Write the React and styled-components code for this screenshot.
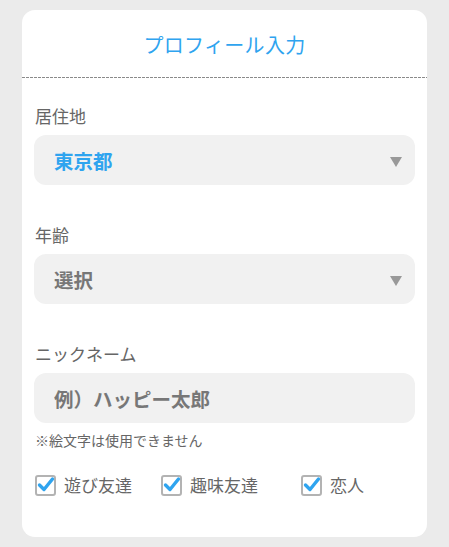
import React, { useState } from "react";
import styled, { createGlobalStyle } from "styled-components";

const GlobalStyle = createGlobalStyle`
  html, body {
    margin: 0;
    padding: 0;
    background: #ebebeb;
  }
  body {
    font-family: "Noto Sans CJK JP", "Noto Sans", sans-serif;
  }
`;

const BLUE = "#2fa4ef";

function Check({ checked }) {
  return (
    <STBox>
      {checked && (
        <svg width="22" height="22" viewBox="0 0 22 22">
          <path
            d="M4.5 11 L9 15.5 L17.5 5"
            fill="none"
            stroke={BLUE}
            strokeWidth="3.4"
            strokeLinecap="round"
            strokeLinejoin="round"
          />
        </svg>
      )}
    </STBox>
  );
}

function App() {
  const [purposes, setPurposes] = useState({
    play: true,
    hobby: true,
    love: true,
  });

  const toggle = (key) => {
    setPurposes({ ...purposes, [key]: !purposes[key] });
  };

  return (
    <STWrapper>
      <GlobalStyle />
      <STCard>
        <STHeader>
          <STTitle>プロフィール入力</STTitle>
        </STHeader>
        <STDivider />
        <STBody>
          <STField>
            <STLabel>居住地</STLabel>
            <STSelect $active>
              <span>東京都</span>
              <STArrow />
            </STSelect>
          </STField>
          <STField>
            <STLabel>年齢</STLabel>
            <STSelect>
              <span>選択</span>
              <STArrow />
            </STSelect>
          </STField>
          <STField>
            <STLabel>ニックネーム</STLabel>
            <STInput placeholder="例）ハッピー太郎" />
            <STNote>※絵文字は使用できません</STNote>
          </STField>
          <STChecks>
            <STCheckItem onClick={() => toggle("play")}>
              <Check checked={purposes.play} />
              遊び友達
            </STCheckItem>
            <STCheckItem onClick={() => toggle("hobby")}>
              <Check checked={purposes.hobby} />
              趣味友達
            </STCheckItem>
            <STCheckItem onClick={() => toggle("love")}>
              <Check checked={purposes.love} />
              恋人
            </STCheckItem>
          </STChecks>
        </STBody>
      </STCard>
    </STWrapper>
  );
}

export default App;

const STWrapper = styled.div`
  padding: 10px 22px 11px 22px;
  width: 449px;
  box-sizing: border-box;
`;

const STCard = styled.div`
  background: #fff;
  border-radius: 13px;
  width: 405px;
  padding-bottom: 40px;
`;

const STHeader = styled.header`
  height: 67px;
  display: flex;
  align-items: center;
  justify-content: center;
`;

const STDivider = styled.div`
  height: 1px;
  background: repeating-linear-gradient(
    90deg,
    #8a8a8a 0 3px,
    transparent 3px 4px
  );
`;

const STTitle = styled.h1`
  margin: 0;
  padding-top: 2px;
  font-size: 20px;
  font-weight: 400;
  color: ${BLUE};
  letter-spacing: 0.3px;
`;

const STBody = styled.div`
  padding: 26px 12px 0 12px;
  display: flex;
  flex-direction: column;
  gap: 38px;
`;

const STField = styled.div`
  display: flex;
  flex-direction: column;
`;

const STLabel = styled.label`
  font-size: 17px;
  line-height: 24px;
  color: #666;
  padding-left: 1px;
  margin-bottom: 7px;
`;

const STSelect = styled.div`
  height: 50px;
  border-radius: 12px;
  background: #f1f1f1;
  display: flex;
  align-items: center;
  justify-content: space-between;
  padding: 0 13px 0 20px;
  font-size: 19.5px;
  font-weight: 700;
  color: ${(props) => (props.$active ? BLUE : "#777")};
`;

const STArrow = styled.span`
  width: 0;
  height: 0;
  margin-top: 4px;
  border-left: 6.5px solid transparent;
  border-right: 6.5px solid transparent;
  border-top: 10px solid #999;
`;

const STInput = styled.input`
  height: 50px;
  border: none;
  outline: none;
  border-radius: 12px;
  background: #f1f1f1;
  padding: 0 20px;
  font-family: inherit;
  font-size: 19.5px;
  font-weight: 700;
  color: #555;
  &::placeholder {
    color: #777;
  }
`;

const STNote = styled.p`
  margin: 7px 0 0 1px;
  font-size: 14px;
  line-height: 20px;
  color: #666;
`;

const STChecks = styled.div`
  display: grid;
  grid-template-columns: 126px 140px auto;
  margin-top: -15px;
  padding-left: 1px;
`;

const STCheckItem = styled.div`
  display: flex;
  align-items: center;
  gap: 8px;
  font-size: 17px;
  line-height: 24px;
  color: #666;
  cursor: pointer;
`;

const STBox = styled.span`
  position: relative;
  width: 21px;
  height: 21px;
  box-sizing: border-box;
  border: 2px solid #b3b3b3;
  border-radius: 3px;
  background: #fff;

  svg {
    position: absolute;
    left: -2px;
    top: -3px;
  }
`;
